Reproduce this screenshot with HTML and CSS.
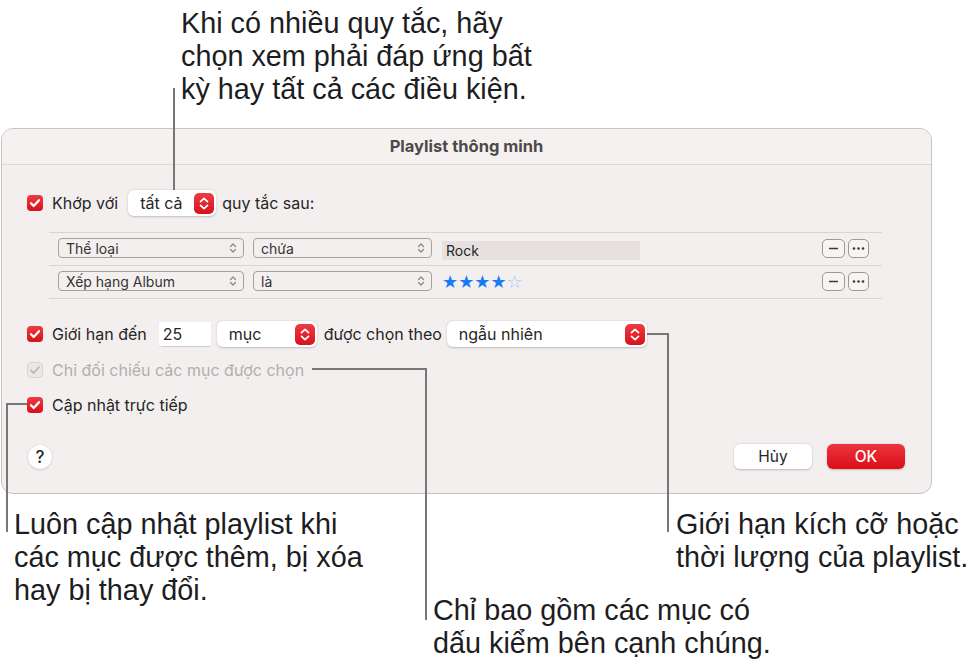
FILE: index.html
```html
<!DOCTYPE html>
<html lang="vi">

<head>
    <meta charset="UTF-8">
    <meta name="viewport" content="width=device-width, initial-scale=1.0">
    <title>Playlist thông minh</title>
    <link rel="stylesheet" href="styles.css">
</head>

<body>
    <div class="page">
        <p class="note note-top">Khi có nhiều quy tắc, hãy<br>chọn xem phải đáp ứng bất<br>kỳ hay tất cả các điều kiện.</p>

        <div class="dialog">
            <div class="titlebar">Playlist thông minh</div>

            <div class="dialog-body">
                <div class="row row-match">
                    <span class="check"><svg viewBox="0 0 16 16"><path d="M4 8.3l2.7 2.7L12 5.2"/></svg></span>
                    <span class="label">Khớp với</span>
                    <div class="popup popup-all">
                        <span>tất cả</span>
                        <span class="stepper"><svg viewBox="0 0 20 20"><path d="M6.5 8.2L10 4.8l3.5 3.4M6.5 11.8L10 15.2l3.5-3.4"/></svg></span>
                    </div>
                    <span class="label">quy tắc sau:</span>
                </div>

                <div class="rules">
                    <div class="rule">
                        <div class="select select-field">Thể loại<svg class="chev" viewBox="0 0 8 12"><path d="M1.5 4.5L4 2l2.5 2.5M1.5 7.5L4 10l2.5-2.5"/></svg></div>
                        <div class="select select-op">chứa<svg class="chev" viewBox="0 0 8 12"><path d="M1.5 4.5L4 2l2.5 2.5M1.5 7.5L4 10l2.5-2.5"/></svg></div>
                        <div class="value">Rock</div>
                        <div class="rule-btns">
                            <span class="mini-btn"><svg viewBox="0 0 23 17"><path d="M6.5 8.5h10"/></svg></span>
                            <span class="mini-btn"><svg viewBox="0 0 19 17"><circle cx="5" cy="8.5" r="1.3"/><circle cx="9.5" cy="8.5" r="1.3"/><circle cx="14" cy="8.5" r="1.3"/></svg></span>
                        </div>
                    </div>
                    <div class="rule">
                        <div class="select select-field">Xếp hạng Album<svg class="chev" viewBox="0 0 8 12"><path d="M1.5 4.5L4 2l2.5 2.5M1.5 7.5L4 10l2.5-2.5"/></svg></div>
                        <div class="select select-op">là<svg class="chev" viewBox="0 0 8 12"><path d="M1.5 4.5L4 2l2.5 2.5M1.5 7.5L4 10l2.5-2.5"/></svg></div>
                        <div class="stars"><span>★★★★</span><span class="star-off">☆</span></div>
                        <div class="rule-btns">
                            <span class="mini-btn"><svg viewBox="0 0 23 17"><path d="M6.5 8.5h10"/></svg></span>
                            <span class="mini-btn"><svg viewBox="0 0 19 17"><circle cx="5" cy="8.5" r="1.3"/><circle cx="9.5" cy="8.5" r="1.3"/><circle cx="14" cy="8.5" r="1.3"/></svg></span>
                        </div>
                    </div>
                </div>

                <div class="row row-limit">
                    <span class="check"><svg viewBox="0 0 16 16"><path d="M4 8.3l2.7 2.7L12 5.2"/></svg></span>
                    <span class="label">Giới hạn đến</span>
                    <span class="field">25</span>
                    <div class="popup popup-unit">
                        <span>mục</span>
                        <span class="stepper"><svg viewBox="0 0 20 20"><path d="M6.5 8.2L10 4.8l3.5 3.4M6.5 11.8L10 15.2l3.5-3.4"/></svg></span>
                    </div>
                    <span class="label">được chọn theo</span>
                    <div class="popup popup-order">
                        <span>ngẫu nhiên</span>
                        <span class="stepper"><svg viewBox="0 0 20 20"><path d="M6.5 8.2L10 4.8l3.5 3.4M6.5 11.8L10 15.2l3.5-3.4"/></svg></span>
                    </div>
                </div>

                <div class="row row-checked is-disabled">
                    <span class="check"><svg viewBox="0 0 16 16"><path d="M4 8.3l2.7 2.7L12 5.2"/></svg></span>
                    <span class="label">Chỉ đối chiếu các mục được chọn</span>
                </div>

                <div class="row row-live">
                    <span class="check"><svg viewBox="0 0 16 16"><path d="M4 8.3l2.7 2.7L12 5.2"/></svg></span>
                    <span class="label">Cập nhật trực tiếp</span>
                </div>

                <div class="footer">
                    <span class="help">?</span>
                    <div class="actions">
                        <span class="btn">Hủy</span>
                        <span class="btn btn-ok">OK</span>
                    </div>
                </div>
            </div>
        </div>

        <div class="notes">
            <p class="note note-live">Luôn cập nhật playlist khi<br>các mục được thêm, bị xóa<br>hay bị thay đổi.</p>
            <p class="note note-checked">Chỉ bao gồm các mục có<br>dấu kiểm bên cạnh chúng.</p>
            <p class="note note-limit">Giới hạn kích cỡ hoặc<br>thời lượng của playlist.</p>
        </div>

        <!-- leader lines for the callouts -->
        <svg class="leaders" viewBox="0 0 979 668">
            <path d="M174 88V190"/>
            <path d="M27 404H7V532"/>
            <path d="M312 369H426V620"/>
            <path d="M647 334H668V532"/>
        </svg>
    </div>
</body>

</html>
```

FILE: styles.css
```css
body {
    margin: 0;
    padding: 0;
    background: #ffffff;
    font-family: Inter, "Noto Sans", sans-serif;
    color: #262626;
}

.page {
    position: relative;
    width: 979px;
    height: 668px;
    overflow: hidden;
}

.note {
    margin: 0;
    font-family: "Liberation Sans", Arial, sans-serif;
    font-size: 28.8px;
    line-height: 33px;
    white-space: nowrap;
    color: #1d1d1f;
}

.note-top {
    box-sizing: border-box;
    height: 128px;
    padding: 7px 0 0 181px;
}

/* dialog window */
.dialog {
    box-sizing: border-box;
    width: 931px;
    height: 366px;
    margin-left: 1px;
    background: #f4efef;
    border: 1px solid #c8c3c3;
    border-radius: 12px;
    overflow: hidden;
}

.titlebar {
    height: 35px;
    line-height: 35px;
    text-align: center;
    font-size: 16.5px;
    font-weight: 700;
    color: #4a4a4a;
    background: #f6f1f1;
    border-bottom: 1px solid #dcd6d6;
}

.dialog-body {
    padding: 0 25px 0 25px;
}

.row {
    display: flex;
    align-items: center;
    font-size: 16px;
}

.row-match {
    margin-top: 25px;
    height: 26px;
}

.row-limit {
    margin-top: 22px;
    height: 26px;
}

.row-checked {
    margin-top: 12px;
    height: 22px;
}

.row-live {
    margin-top: 13px;
    height: 22px;
}

.check {
    width: 16px;
    height: 16px;
    border-radius: 4px;
    background: linear-gradient(#ef3b42, #d6111b);
    flex-shrink: 0;
    margin-right: 9px;
}

.check svg {
    display: block;
    width: 16px;
    height: 16px;
    fill: none;
    stroke: #ffffff;
    stroke-width: 2.3;
    stroke-linecap: round;
    stroke-linejoin: round;
}

.is-disabled {
    color: #b3aeae;
}

.is-disabled .check {
    box-sizing: border-box;
    background: #ece7e7;
    border: 1px solid #d9d3d3;
}

.is-disabled .check svg {
    margin: -1px;
    stroke: #bcb7b7;
    stroke-width: 1.8;
}

/* popup buttons */
.popup {
    box-sizing: border-box;
    display: flex;
    align-items: center;
    justify-content: space-between;
    height: 26px;
    padding: 0 2px 0 12px;
    background: #ffffff;
    border-radius: 6px;
    box-shadow: 0 0.5px 2px rgba(0, 0, 0, 0.22);
}

.popup-all {
    width: 88px;
    margin: 0 6px 0 10px;
}

.popup-unit {
    width: 100px;
    margin: 0 7px 0 6px;
    padding-left: 12px;
}

.popup-order {
    width: 200px;
    margin-left: 5px;
}

.stepper {
    width: 20px;
    height: 21px;
    border-radius: 5px;
    background: linear-gradient(#ef3b42, #d8121c);
}

.stepper svg {
    display: block;
    width: 20px;
    height: 21px;
    fill: none;
    stroke: #ffffff;
    stroke-width: 1.7;
    stroke-linecap: round;
    stroke-linejoin: round;
}

.field {
    box-sizing: border-box;
    width: 52px;
    height: 24px;
    line-height: 24px;
    padding-left: 4px;
    margin-left: 12px;
    background: #ffffff;
    box-shadow: 0 0.5px 1px rgba(0, 0, 0, 0.15);
}

/* rule table */
.rules {
    margin: 16px 0 0 22px;
    width: 833px;
    border-bottom: 1px solid #dad4d4;
}

.rule {
    box-sizing: border-box;
    display: flex;
    align-items: flex-start;
    height: 33px;
    padding: 5px 13px 0 9px;
    border-top: 1px solid #dad4d4;
    font-size: 14px;
}

.select {
    box-sizing: border-box;
    display: flex;
    align-items: center;
    justify-content: space-between;
    height: 20px;
    padding: 0 6px 0 7px;
    border: 1px solid #a6a1a1;
    border-radius: 4px;
    color: #333333;
}

.select-field {
    width: 186px;
}

.select-op {
    width: 179px;
    margin-left: 9px;
}

.chev {
    width: 8px;
    height: 12px;
    fill: none;
    stroke: #8a8585;
    stroke-width: 1.2;
    stroke-linecap: round;
    stroke-linejoin: round;
}

.value {
    box-sizing: border-box;
    width: 198px;
    height: 19px;
    line-height: 20px;
    margin: 3px 0 0 10px;
    padding-left: 4px;
    background: #e6e0e0;
}

.stars {
    margin: 0 0 0 10px;
    font-family: "DejaVu Sans", sans-serif;
    font-size: 18px;
    line-height: 22px;
    color: #1a7cf4;
}

.star-off {
    color: #9ec6f6;
}

.rule-btns {
    display: flex;
    gap: 3px;
    margin: 1px 0 0 auto;
}

.mini-btn {
    box-sizing: border-box;
    width: 23px;
    height: 19px;
    border: 1px solid #9e9999;
    border-radius: 5px;
    background: #f7f4f4;
}

.mini-btn + .mini-btn {
    width: 21px;
}

.mini-btn svg {
    display: block;
    width: 100%;
    height: 17px;
    stroke: #3a3a3a;
    stroke-width: 1.4;
    fill: #3a3a3a;
}

.mini-btn circle {
    stroke: none;
}

/* footer */
.footer {
    display: flex;
    align-items: center;
    justify-content: space-between;
    margin-top: 28px;
    height: 25px;
}

.help {
    box-sizing: border-box;
    width: 24px;
    height: 24px;
    line-height: 24px;
    margin-left: 1px;
    border-radius: 50%;
    background: #ffffff;
    box-shadow: 0 0.5px 2px rgba(0, 0, 0, 0.25);
    text-align: center;
    font-size: 17px;
    font-weight: 500;
}

.actions {
    display: flex;
    gap: 15px;
    margin-right: 1px;
}

.btn {
    width: 78px;
    height: 25px;
    line-height: 25px;
    text-align: center;
    font-size: 15.5px;
    background: #ffffff;
    border-radius: 6px;
    box-shadow: 0 0.5px 2px rgba(0, 0, 0, 0.22);
}

.btn-ok {
    color: #ffffff;
    font-weight: 500;
    background: linear-gradient(#ec343c, #dc0e19);
}

/* bottom callouts */
.notes {
    display: flex;
    align-items: flex-start;
    padding-left: 14px;
    margin-top: 14px;
}

.note-live {
    width: 419px;
}

.note-checked {
    width: 243px;
    margin-top: 86px;
}

.leaders {
    position: absolute;
    left: 0;
    top: 0;
    width: 979px;
    height: 668px;
    pointer-events: none;
    fill: none;
    stroke: #777777;
    stroke-width: 2;
}
```
